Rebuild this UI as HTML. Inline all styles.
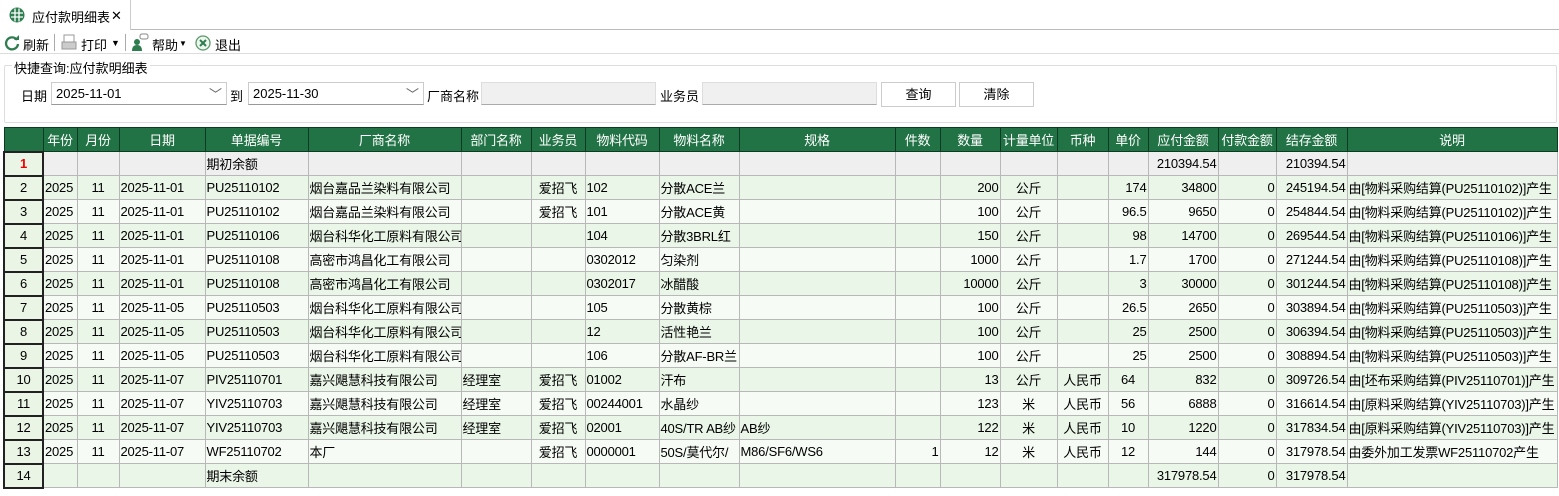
<!DOCTYPE html><html><head><meta charset="utf-8"><style>
*{margin:0;padding:0;box-sizing:border-box}
body{width:1559px;height:496px;background:#fff;font-family:"Liberation Sans","Noto Sans CJK SC",sans-serif;font-size:13px;color:#000;position:relative;overflow:hidden}
.abs{position:absolute}
.tab{left:0;top:0;width:131px;height:30px;border-right:1px solid #ccc;background:#fff}
.tabline{left:131px;top:29px;width:1428px;height:1px;background:#bbb}
.tb{top:31px;height:23px;left:0;width:1559px;border-bottom:1px solid #ddd}
.tb span{position:absolute;top:4px}
.sep{position:absolute;top:3px;width:1px;height:17px;background:#aaa}
.fs{left:4px;top:65px;width:1553px;height:58px;border:1px solid #ddd;border-radius:2px}
.lg{left:12px;top:58px;background:#fff;padding:0 2px}
.inp{height:23px;border:1px solid #ccc;border-bottom:1px solid #999;background:#fff;font-size:13px;padding:3px 4px}
.gray{background:#f0f0f0;border-color:#ddd #ddd #aaa #ddd;padding:3px}
.btn{height:25px;border:1px solid #ccc;background:#fff;text-align:center;line-height:23px}
table{position:absolute;left:3px;top:127px;border-collapse:collapse;table-layout:fixed;width:1553px}
td,th{height:24px;border:1px solid #b8b8b8;white-space:nowrap;overflow:hidden;padding:0 1px;font-weight:normal;letter-spacing:-0.2px}
th{background:#217346;color:#fff;text-align:center;border:1px solid #0d3b22}
td.n{background:#eef7ec;text-align:center;border:2px solid #222}
tr.a td{background:#eaf6e7}tr.b td{background:#f6fbf5}tr.g td{background:#efefef}
tr td.n{background:#eaf5e6}
.r{text-align:right}.c{text-align:center}
</style></head><body>
<div class="abs tab"></div>
<div class="abs tabline"></div>
<svg class="abs" style="left:9px;top:7px" width="16" height="16" viewBox="0 0 16 16"><circle cx="8" cy="8" r="7.5" fill="#2e7d4f"/><path d="M2 6h12M2 10h12M6 1.5v13M10 1.5v13" stroke="#fff" stroke-width="1.3"/></svg>
<div class="abs" style="left:32px;top:7px">应付款明细表</div>
<div class="abs" style="left:111px;top:8px;font-size:13px">✕</div>
<div class="abs tb">
<svg style="position:absolute;left:4px;top:4px" width="16" height="16" viewBox="0 0 16 16"><path d="M13 5A6 6 0 1 0 14 9" stroke="#2e7d4f" stroke-width="2.3" fill="none"/><path d="M10 5h5V0z" fill="#2e7d4f"/></svg>
<span style="left:23px">刷新</span><div class="sep" style="left:54px"></div>
<svg style="position:absolute;left:61px;top:3px" width="16" height="17" viewBox="0 0 16 17"><rect x="3" y="1" width="10" height="7" fill="#fff" stroke="#999"/><rect x="1" y="8" width="14" height="7" fill="#ccc" stroke="#999"/></svg>
<span style="left:81px">打印</span><span style="left:111px;font-size:9px;top:7px">▼</span><div class="sep" style="left:125px"></div>
<svg style="position:absolute;left:131px;top:2px" width="18" height="18" viewBox="0 0 18 18"><circle cx="6" cy="9" r="3" fill="#2e7d4f"/><path d="M1 18q0-6 5-6t5 6z" fill="#2e7d4f"/><rect x="9" y="1" width="8" height="5" rx="2" fill="#fff" stroke="#888"/></svg>
<span style="left:152px">帮助</span><span style="left:179px;font-size:8px;top:8px">▼</span>
<svg style="position:absolute;left:195px;top:4px" width="16" height="16" viewBox="0 0 16 16"><circle cx="8" cy="8" r="7" fill="#eef6ee" stroke="#5a9a6a" stroke-width="1.3"/><path d="M5 5l6 6M11 5l-6 6" stroke="#2e7d4f" stroke-width="2"/></svg>
<span style="left:215px">退出</span></div>
<div class="abs fs"></div>
<div class="abs lg">快捷查询:应付款明细表</div>
<div class="abs" style="left:21px;top:86px">日期</div>
<div class="abs inp" style="left:51px;top:82px;width:176px">2025-11-01<span style="position:absolute;right:4px;top:1px;color:#666">﹀</span></div>
<div class="abs" style="left:230px;top:86px">到</div>
<div class="abs inp" style="left:248px;top:82px;width:176px">2025-11-30<span style="position:absolute;right:4px;top:1px;color:#666">﹀</span></div>
<div class="abs" style="left:427px;top:86px">厂商名称</div>
<div class="abs inp gray" style="left:481px;top:82px;width:175px"></div>
<div class="abs" style="left:660px;top:86px">业务员</div>
<div class="abs inp gray" style="left:702px;top:82px;width:175px"></div>
<div class="abs btn" style="left:881px;top:82px;width:75px">查询</div>
<div class="abs btn" style="left:959px;top:82px;width:75px">清除</div>
<table>
<colgroup><col style="width:39px"><col style="width:34px"><col style="width:42px"><col style="width:86px"><col style="width:103px"><col style="width:153px"><col style="width:70px"><col style="width:54px"><col style="width:74px"><col style="width:80px"><col style="width:156px"><col style="width:45px"><col style="width:60px"><col style="width:57px"><col style="width:51px"><col style="width:40px"><col style="width:70px"><col style="width:58px"><col style="width:71px"><col style="width:210px"></colgroup>
<tr><th></th><th>年份</th><th>月份</th><th>日期</th><th>单据编号</th><th>厂商名称</th><th>部门名称</th><th>业务员</th><th>物料代码</th><th>物料名称</th><th>规格</th><th>件数</th><th>数量</th><th>计量单位</th><th>币种</th><th>单价</th><th>应付金额</th><th>付款金额</th><th>结存金额</th><th>说明</th></tr>
<tr class="g"><td class="n" style="color:#e00;font-weight:bold">1</td><td></td><td></td><td></td><td>期初余额</td><td></td><td></td><td></td><td></td><td></td><td></td><td></td><td></td><td></td><td></td><td></td><td class="r">210394.54</td><td></td><td class="r">210394.54</td><td></td></tr>
<tr class="a"><td class="n">2</td><td>2025</td><td class="c">11</td><td>2025-11-01</td><td>PU25110102</td><td>烟台嘉品兰染料有限公司</td><td></td><td class="c">爱招飞</td><td>102</td><td>分散ACE兰</td><td></td><td></td><td class="r">200</td><td class="c">公斤</td><td></td><td class="r">174</td><td class="r">34800</td><td class="r">0</td><td class="r">245194.54</td><td>由[物料采购结算(PU25110102)]产生</td></tr>
<tr class="b"><td class="n">3</td><td>2025</td><td class="c">11</td><td>2025-11-01</td><td>PU25110102</td><td>烟台嘉品兰染料有限公司</td><td></td><td class="c">爱招飞</td><td>101</td><td>分散ACE黄</td><td></td><td></td><td class="r">100</td><td class="c">公斤</td><td></td><td class="r">96.5</td><td class="r">9650</td><td class="r">0</td><td class="r">254844.54</td><td>由[物料采购结算(PU25110102)]产生</td></tr>
<tr class="a"><td class="n">4</td><td>2025</td><td class="c">11</td><td>2025-11-01</td><td>PU25110106</td><td>烟台科华化工原料有限公司</td><td></td><td></td><td>104</td><td>分散3BRL红</td><td></td><td></td><td class="r">150</td><td class="c">公斤</td><td></td><td class="r">98</td><td class="r">14700</td><td class="r">0</td><td class="r">269544.54</td><td>由[物料采购结算(PU25110106)]产生</td></tr>
<tr class="b"><td class="n">5</td><td>2025</td><td class="c">11</td><td>2025-11-01</td><td>PU25110108</td><td>高密市鸿昌化工有限公司</td><td></td><td></td><td>0302012</td><td>匀染剂</td><td></td><td></td><td class="r">1000</td><td class="c">公斤</td><td></td><td class="r">1.7</td><td class="r">1700</td><td class="r">0</td><td class="r">271244.54</td><td>由[物料采购结算(PU25110108)]产生</td></tr>
<tr class="a"><td class="n">6</td><td>2025</td><td class="c">11</td><td>2025-11-01</td><td>PU25110108</td><td>高密市鸿昌化工有限公司</td><td></td><td></td><td>0302017</td><td>冰醋酸</td><td></td><td></td><td class="r">10000</td><td class="c">公斤</td><td></td><td class="r">3</td><td class="r">30000</td><td class="r">0</td><td class="r">301244.54</td><td>由[物料采购结算(PU25110108)]产生</td></tr>
<tr class="b"><td class="n">7</td><td>2025</td><td class="c">11</td><td>2025-11-05</td><td>PU25110503</td><td>烟台科华化工原料有限公司</td><td></td><td></td><td>105</td><td>分散黄棕</td><td></td><td></td><td class="r">100</td><td class="c">公斤</td><td></td><td class="r">26.5</td><td class="r">2650</td><td class="r">0</td><td class="r">303894.54</td><td>由[物料采购结算(PU25110503)]产生</td></tr>
<tr class="a"><td class="n">8</td><td>2025</td><td class="c">11</td><td>2025-11-05</td><td>PU25110503</td><td>烟台科华化工原料有限公司</td><td></td><td></td><td>12</td><td>活性艳兰</td><td></td><td></td><td class="r">100</td><td class="c">公斤</td><td></td><td class="r">25</td><td class="r">2500</td><td class="r">0</td><td class="r">306394.54</td><td>由[物料采购结算(PU25110503)]产生</td></tr>
<tr class="b"><td class="n">9</td><td>2025</td><td class="c">11</td><td>2025-11-05</td><td>PU25110503</td><td>烟台科华化工原料有限公司</td><td></td><td></td><td>106</td><td>分散AF-BR兰</td><td></td><td></td><td class="r">100</td><td class="c">公斤</td><td></td><td class="r">25</td><td class="r">2500</td><td class="r">0</td><td class="r">308894.54</td><td>由[物料采购结算(PU25110503)]产生</td></tr>
<tr class="a"><td class="n">10</td><td>2025</td><td class="c">11</td><td>2025-11-07</td><td>PIV25110701</td><td>嘉兴飓慧科技有限公司</td><td>经理室</td><td class="c">爱招飞</td><td>01002</td><td>汗布</td><td></td><td></td><td class="r">13</td><td class="c">公斤</td><td class="c">人民币</td><td class="c">64</td><td class="r">832</td><td class="r">0</td><td class="r">309726.54</td><td>由[坯布采购结算(PIV25110701)]产生</td></tr>
<tr class="b"><td class="n">11</td><td>2025</td><td class="c">11</td><td>2025-11-07</td><td>YIV25110703</td><td>嘉兴飓慧科技有限公司</td><td>经理室</td><td class="c">爱招飞</td><td>00244001</td><td>水晶纱</td><td></td><td></td><td class="r">123</td><td class="c">米</td><td class="c">人民币</td><td class="c">56</td><td class="r">6888</td><td class="r">0</td><td class="r">316614.54</td><td>由[原料采购结算(YIV25110703)]产生</td></tr>
<tr class="a"><td class="n">12</td><td>2025</td><td class="c">11</td><td>2025-11-07</td><td>YIV25110703</td><td>嘉兴飓慧科技有限公司</td><td>经理室</td><td class="c">爱招飞</td><td>02001</td><td>40S/TR AB纱</td><td>AB纱</td><td></td><td class="r">122</td><td class="c">米</td><td class="c">人民币</td><td class="c">10</td><td class="r">1220</td><td class="r">0</td><td class="r">317834.54</td><td>由[原料采购结算(YIV25110703)]产生</td></tr>
<tr class="b"><td class="n">13</td><td>2025</td><td class="c">11</td><td>2025-11-07</td><td>WF25110702</td><td>本厂</td><td></td><td class="c">爱招飞</td><td>0000001</td><td>50S/莫代尔/</td><td>M86/SF6/WS6</td><td class="r">1</td><td class="r">12</td><td class="c">米</td><td class="c">人民币</td><td class="c">12</td><td class="r">144</td><td class="r">0</td><td class="r">317978.54</td><td>由委外加工发票WF25110702产生</td></tr>
<tr class="a"><td class="n">14</td><td></td><td></td><td></td><td>期末余额</td><td></td><td></td><td></td><td></td><td></td><td></td><td></td><td></td><td></td><td></td><td></td><td class="r">317978.54</td><td class="r">0</td><td class="r">317978.54</td><td></td></tr>
</table>
</body></html>
